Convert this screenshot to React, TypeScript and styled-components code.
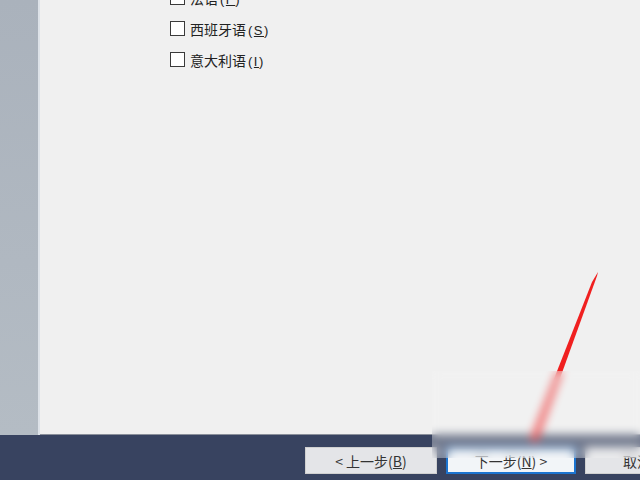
import React from "react";
import styled, { createGlobalStyle } from "styled-components";

const Global = createGlobalStyle`
  html, body { margin: 0; padding: 0; }
  body {
    width: 640px;
    height: 480px;
    overflow: hidden;
    font-family: "Noto Sans CJK SC", "Liberation Sans", sans-serif;
  }
`;

const Page = styled.div`
  position: relative;
  width: 640px;
  height: 480px;
  display: grid;
  grid-template-rows: 435px 45px;
  overflow: hidden;
`;

const Top = styled.div`
  display: flex;
`;

const Side = styled.div`
  width: 38px;
  background: linear-gradient(180deg, #aab2bc 0%, #b0b8c1 60%, #b4bcc4 100%);
  border-right: 2px solid #dde2e8;
`;

const Main = styled.div`
  flex: 1;
  background: #f0f0f0;
  padding: 0 0 0 130px;
  border-bottom: 1px solid #8a8f9a;
`;

const List = styled.div`
  display: flex;
  flex-direction: column;
  gap: 12px;
  margin-top: -12px;
`;

const Row = styled.label`
  display: flex;
  align-items: center;
  gap: 5px;
  height: 19px;
  font-size: 14px;
  color: #222;
`;

const Box = styled.span`
  width: 13px;
  height: 13px;
  border: 1px solid #3a3a3a;
  background: #fff;
`;

const Paren = styled.span`
  font-family: "Liberation Sans", sans-serif;
  font-size: 13px;
  letter-spacing: 1.5px;
  margin-left: 2px;
`;

const Key = styled.span`
  text-decoration: underline;
`;

const Bottom = styled.div`
  background: #384360;
  display: flex;
  align-items: flex-start;
  padding: 12px 0 0 305px;
  gap: 9px;
`;

const Btn = styled.div<{ primary?: boolean; w: number }>`
  box-sizing: border-box;
  width: ${(p) => p.w}px;
  height: 27px;
  background: ${(p) => (p.primary ? "#f2f5f8" : "#e4e5e8")};
  border: ${(p) => (p.primary ? "2px solid #1c74cf" : "1px solid #d0d0d0")};
  display: flex;
  align-items: center;
  justify-content: center;
  font-size: 14px;
  color: #333;
  flex-shrink: 0;
`;

const Blur = styled.div`
  position: absolute;
  left: 432px;
  top: 371px;
  width: 208px;
  height: 87px;
  backdrop-filter: blur(5px);
  background: rgba(244, 244, 244, 0.3);
`;

const Arrow = styled.svg`
  position: absolute;
  left: 0;
  top: 0;
`;

export default function App() {
  return (
    <Page>
      <Global />
      <Top>
        <Side />
        <Main>
          <List>
            <Row>
              <Box />
              <span>法语<Paren>(<Key>F</Key>)</Paren></span>
            </Row>
            <Row>
              <Box />
              <span>西班牙语<Paren>(<Key>S</Key>)</Paren></span>
            </Row>
            <Row>
              <Box />
              <span>意大利语<Paren>(<Key>I</Key>)</Paren></span>
            </Row>
          </List>
        </Main>
      </Top>
      <Bottom>
        <Btn w={132}>&lt; 上一步(<Key>B</Key>)</Btn>
        <Btn w={130} primary>下一步(<Key>N</Key>) &gt;</Btn>
        <Btn w={104}>取消</Btn>
      </Bottom>
      <Arrow width="640" height="480" viewBox="0 0 640 480">
        <polygon points="598,272 597,276 537,442 530,440 592,282" fill="#f02020" />
      </Arrow>
      <Blur />
    </Page>
  );
}
